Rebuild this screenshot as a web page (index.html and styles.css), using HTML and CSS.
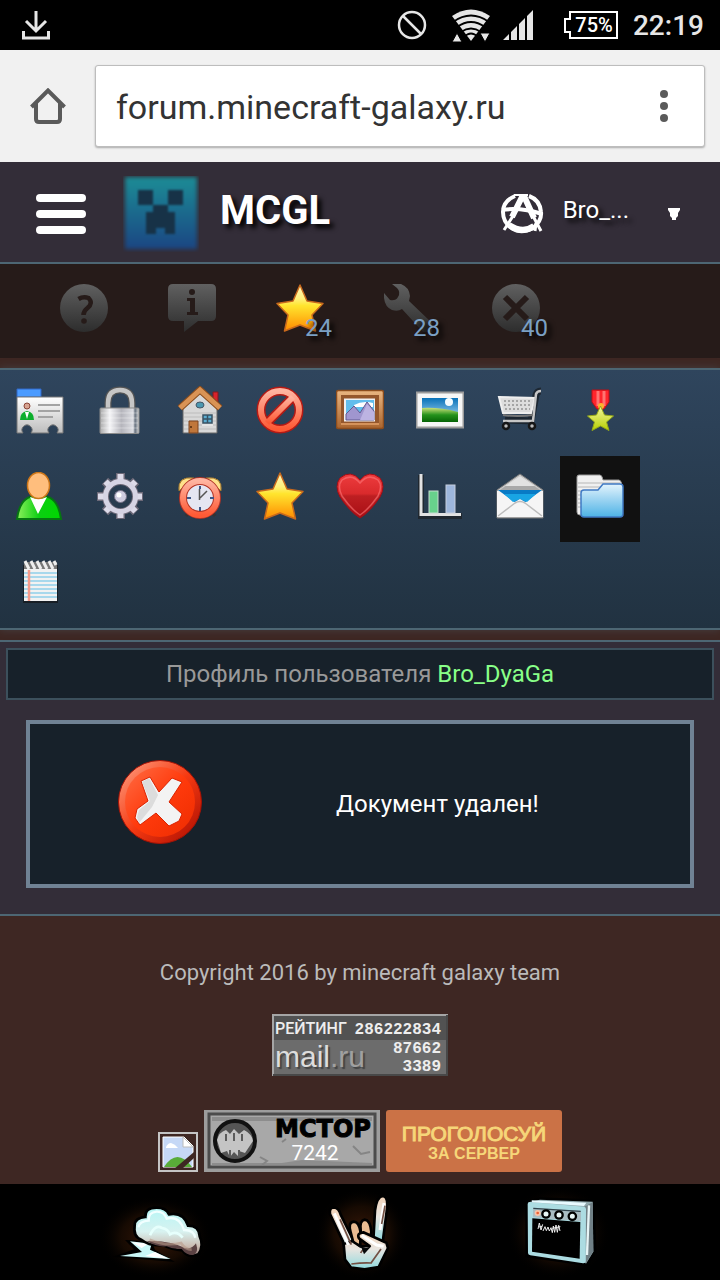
FILE: index.html
```html
<!DOCTYPE html>
<html lang="ru">
<head>
    <meta charset="UTF-8">
    <meta name="viewport" content="width=device-width, initial-scale=1.0">
    <title>MCGL - Профиль пользователя</title>
    <link rel="stylesheet" href="styles.css">
</head>
<body>
    <!-- shared gradients and shapes -->
    <svg class="defs" aria-hidden="true">
        <defs>
            <linearGradient id="gold" x2="0" y2="1"><stop offset="0" stop-color="#fff6c0"/><stop offset=".3" stop-color="#fff07a"/><stop offset=".45" stop-color="#ffe52e"/><stop offset="1" stop-color="#ff8a00"/></linearGradient>
            <linearGradient id="dim" x2="0" y2="1"><stop offset="0" stop-color="#606060"/><stop offset="1" stop-color="#2d2d2d"/></linearGradient>
            <linearGradient id="paper" x2="0" y2="1"><stop offset="0" stop-color="#fff"/><stop offset="1" stop-color="#bdbdbd"/></linearGradient>
            <linearGradient id="steel"><stop offset="0" stop-color="#aaa"/><stop offset=".25" stop-color="#f5f5f7"/><stop offset=".55" stop-color="#b5b5bc"/><stop offset=".85" stop-color="#dcdde2"/><stop offset=".9" stop-color="#66717e"/><stop offset="1" stop-color="#d8d8d8"/></linearGradient>
            <linearGradient id="wood" x2="0" y2="1"><stop offset="0" stop-color="#eab681"/><stop offset="1" stop-color="#a9652f"/></linearGradient>
            <linearGradient id="red" x2="0" y2="1"><stop offset="0" stop-color="#ffb4a0"/><stop offset="1" stop-color="#ff5a35"/></linearGradient>
            <linearGradient id="heart" x2="0" y2="1"><stop offset="0" stop-color="#ee3c3e"/><stop offset=".45" stop-color="#d92a2c"/><stop offset=".5" stop-color="#bd1f22"/><stop offset="1" stop-color="#a80e14"/></linearGradient>
            <linearGradient id="sky" x2="0" y2="1"><stop offset="0" stop-color="#0871b8"/><stop offset="1" stop-color="#c0e7ff"/></linearGradient>
            <linearGradient id="grass" x2="0" y2="1"><stop offset="0" stop-color="#c9df7a"/><stop offset=".5" stop-color="#25921c"/><stop offset="1" stop-color="#066306"/></linearGradient>
            <linearGradient id="folder" x2="0" y2="1"><stop offset="0" stop-color="#e3f4fd"/><stop offset=".45" stop-color="#9fd5f2"/><stop offset="1" stop-color="#4db3e6"/></linearGradient>
            <linearGradient id="green"><stop offset="0" stop-color="#8cf05c"/><stop offset=".5" stop-color="#0bcf12"/><stop offset="1" stop-color="#00d800"/></linearGradient>
            <linearGradient id="logo" x2="0" y2="1"><stop offset="0" stop-color="#1c8c96"/><stop offset="1" stop-color="#1b4683"/></linearGradient>
            <linearGradient id="lime" x2="0" y2="1"><stop offset="0" stop-color="#f3f8a0"/><stop offset="1" stop-color="#b7cf00"/></linearGradient>
            <linearGradient id="error" x2="1" y2="1"><stop offset="0" stop-color="#ff6d45"/><stop offset=".5" stop-color="#ff3a0c"/><stop offset="1" stop-color="#ee2c00"/></linearGradient>
            <linearGradient id="rim" x2="1" y2="1"><stop offset="0" stop-color="#ffa588"/><stop offset=".5" stop-color="#f53a12"/><stop offset="1" stop-color="#a80b00"/></linearGradient>
            <linearGradient id="ice" x2="0" y2="1"><stop offset="0" stop-color="#b6f6f5"/><stop offset=".5" stop-color="#d8f2f0"/><stop offset=".8" stop-color="#cbbcb2"/><stop offset="1" stop-color="#9b8581"/></linearGradient>
            <linearGradient id="skin" x2="0" y2="1"><stop offset="0" stop-color="#f2d3b8"/><stop offset=".45" stop-color="#e8e5e0"/><stop offset="1" stop-color="#8fd9de"/></linearGradient>
            <radialGradient id="glow"><stop offset="0" stop-color="#7a3412" stop-opacity=".5"/><stop offset=".6" stop-color="#4a2208" stop-opacity=".3"/><stop offset="1" stop-color="#000" stop-opacity="0"/></radialGradient>
            <symbol id="star" viewBox="0 0 48 48"><path d="M24 1l7 16 16 2.500L36 31l3.500 16L24 41 8.500 47 12 31 1 19.500 17 17z" fill="url(#gold)" stroke="#c8691c" stroke-width="1.500" stroke-linejoin="round"/></symbol>
        </defs>
    </svg>

    <div class="status-bar">
        <svg class="download" viewBox="0 0 30 30" width="30" height="30"><path d="M15 1v20M5 11l10 10 10-10M2.500 21v7h25v-7" fill="none" stroke="#e6e6e6" stroke-width="3"/></svg>
        <svg class="blocked" viewBox="0 0 30 30" width="30" height="30"><circle cx="15" cy="15" r="13" fill="none" stroke="#e6e6e6" stroke-width="2.500"/><path d="M6 6l18 18" stroke="#e6e6e6" stroke-width="2.500"/></svg>
        <svg class="wifi" viewBox="0 0 40 34" width="40" height="34">
            <path d="M1 8Q20-5 39 8L20 33z" fill="#e6e6e6"/>
            <path d="M2 14Q20 1 38 14M6 19Q20 9 34 19M10 24Q20 17 30 24M13 29Q20 22 27 29" fill="none" stroke="#000" stroke-width="1.800"/>
            <path d="M1 34L6 25l5 9zM29 25h10l-5 9z" fill="#e6e6e6" stroke="#000"/>
        </svg>
        <svg class="signal" viewBox="0 0 30 30" width="30" height="30"><path d="M0 30l6-6v6zM8 22l6-6v14H8zM16 14l6-6v22h-6zM24 6l6-6v30h-6z" fill="#e6e6e6"/></svg>
        <svg class="battery" viewBox="0 0 56 30" width="56" height="30">
            <path d="M7 2h47v26H7v-6H2V9h5z" fill="none" stroke="#fff" stroke-width="2"/>
            <text x="31" y="22" text-anchor="middle" class="battery-text">75%</text>
        </svg>
        <time>22:19</time>
    </div>

    <div class="browser-bar">
        <button class="plain" aria-label="Home"><svg viewBox="0 0 36 36" width="36" height="36"><path d="M1.500 19L18 2.500 34.500 19M6 15v16q0 3 3 3h18q3 0 3-3V15" fill="none" stroke="#5a5a5a" stroke-width="4"/></svg></button>
        <div class="address">
            <input type="text" value="forum.minecraft-galaxy.ru" aria-label="Address">
            <button class="plain" aria-label="Menu"><svg viewBox="0 0 10 34" width="10" height="34"><g fill="#5a5a5a"><circle cx="5" cy="5" r="4"/><circle cx="5" cy="17" r="4"/><circle cx="5" cy="29" r="4"/></g></svg></button>
        </div>
    </div>

    <header>
        <button class="plain menu" aria-label="Меню"><span></span><span></span><span></span></button>
        <a href="#" class="brand">
            <svg viewBox="0 0 76 76" width="76" height="76">
                <rect class="soft" x="2" y="1" width="72" height="72" fill="url(#logo)"/>
                <path class="soft-small" d="M15 14h15v15h15V14h15v15H45v7h7v22H42v-6H33v6H23V36h7v-7H15z" fill="#173247"/>
            </svg>
            <strong>MCGL</strong>
        </a>
        <div class="user">
            <svg viewBox="0 0 44 40" width="44" height="40">
                <g fill="none" stroke="#fff">
                    <path d="M15 2Q3 7 3 18t10 17q9 5 20-1 9-7 8-16Q40 6 29 2" stroke-width="4"/>
                    <path d="M2 16q18-3 40 4" stroke-width="4"/>
                    <path d="M23 1L12 23M24 2l10 22" stroke-width="6"/>
                    <path d="M15 19L4 36M32 20l9 17M36 29l-1 8" stroke-width="3"/>
                    <path d="M9 31q14 9 25 1" stroke-width="6"/>
                    <path d="M14 1h14" stroke-width="2"/>
                </g>
            </svg>
            <a href="#" class="nick">Bro_...</a>
            <button class="plain arrow" aria-label="Открыть"><svg viewBox="0 0 12 14" width="12" height="14"><path d="M0 1h12v2l-2 3v3L8 11v2H4v-2L2 9V6L0 3z" fill="#fff"/></svg></button>
        </div>
    </header>

    <nav class="counters">
        <a href="#" aria-label="Помощь"><svg viewBox="0 0 48 48"><circle cx="24" cy="24" r="24" fill="url(#dim)"/><path d="M18.500 15q5-3 10-1 5 5-1 10-4 3-4 7" fill="none" stroke="#261b19" stroke-width="4.500"/><circle cx="24" cy="37" r="2.800" fill="#261b19"/></svg></a>
        <a href="#" aria-label="Информация"><svg viewBox="0 0 48 48"><path d="M5 0h38q5 0 5 5v27q0 5-5 5H30L16 48V37H5q-5 0-5-5V5q0-5 5-5z" fill="url(#dim)"/><circle cx="24" cy="8" r="3" fill="#261b19"/><path d="M19 14h8v14h3v3H19v-3h3V17h-3z" fill="#261b19"/></svg></a>
        <a href="#" aria-label="Избранное"><svg viewBox="0 0 48 48"><use href="#star"/></svg><span>24</span></a>
        <a href="#" aria-label="Инструменты"><svg viewBox="0 0 48 48"><path d="M8 0h9q8 3 9 12l-1 5 23 22v9h-9L18 25q-4 3-10 1-7-3-8-12V9l6 7q6 1 8-3 3-5-1-9z" fill="url(#dim)"/></svg><span>28</span></a>
        <a href="#" aria-label="Закрытые"><svg viewBox="0 0 48 48"><circle cx="24" cy="24" r="24" fill="url(#dim)"/><path d="M13 13l22 22M35 13L13 35" stroke="#261b19" stroke-width="6"/></svg><span>40</span></a>
    </nav>

    <nav class="icons">
        <a href="#" aria-label="Профиль"><svg viewBox="0 0 48 48">
            <path d="M1 3h24v8H1z" fill="#4b9bff" stroke="#3169c8"/>
            <path d="M1 11h46v36h-6a5 5 0 1 0-8 0H15a5 5 0 1 0-8 0H1z" fill="url(#paper)" stroke="#777"/>
            <circle cx="11" cy="20" r="3" fill="#d7a391" stroke="#8b4537"/>
            <path d="M4 34q0-8 7-9 7 1 7 9z" fill="#0cae2c"/><path d="M9 26h4l-2 7z" fill="#fff"/>
            <path d="M22 19h22M22 25h22M22 31h15" stroke="#a3a3a3" stroke-width="2"/>
        </svg></a>
        <a href="#" aria-label="Доступ"><svg viewBox="0 0 48 48">
            <path d="M12 24V17Q12 4 24 4t12 13v7" fill="none" stroke="#555" stroke-width="7"/>
            <path d="M12 24V17Q12 4 24 4t12 13v7" fill="none" stroke="#c6c6c6" stroke-width="4.500"/>
            <rect x="4" y="22" width="39" height="25.500" rx="1" fill="url(#steel)" stroke="#8b8b8b"/>
            <path d="M5 27h37M5 32h37M5 37h37M5 42h37" stroke="#fff" opacity=".35"/>
        </svg></a>
        <a href="#" aria-label="Дом"><svg viewBox="0 0 48 48">
            <path d="M37 6h5v14l-5-5z" fill="#d8232b" stroke="#801b20"/>
            <path d="M7 22L24 6l17 16v25H7z" fill="#d8d8d8" stroke="#666"/>
            <path d="M8 27h32M8 31h32M8 35h32M8 39h32M8 43h32" stroke="#bcbcbc"/>
            <path d="M4 22L24 4l20 18" fill="none" stroke="#8b4d1d" stroke-width="7"/>
            <path d="M4 22L24 4l20 18" fill="none" stroke="#d99355" stroke-width="5"/>
            <ellipse cx="24" cy="19" rx="4" ry="3" fill="#4b98b2" stroke="#456"/>
            <path d="M27 29h9v8h-9zM31.500 29v8M27 33h9" fill="#5badd0" stroke="#385263" stroke-width="1.500"/>
            <path d="M26 39h11" stroke="#fff"/>
            <path d="M13 35h9v12h-9z" fill="#c0773b" stroke="#7c4520"/><circle cx="15" cy="41" r="1" fill="#512b11"/>
        </svg></a>
        <a href="#" aria-label="Запрет"><svg viewBox="0 0 48 48">
            <g fill="none" stroke="#b51a14" stroke-width="9"><circle cx="24" cy="24" r="19"/><path d="M11 37l26-26"/></g>
            <g fill="none" stroke="url(#red)" stroke-width="6"><circle cx="24" cy="24" r="19"/><path d="M11 37l26-26"/></g>
        </svg></a>
        <a href="#" aria-label="Галерея"><svg viewBox="0 0 48 48">
            <rect x=".5" y="4.500" width="47" height="38" rx="2" fill="url(#wood)" stroke="#8d4d1d" stroke-width="1.500"/>
            <path d="M5 9h38v29H5z" fill="#95572c"/><path d="M5 38h38" stroke="#d5935b" stroke-width="2"/>
            <path d="M8 12.500h31v23H8z" fill="#f0f0f0"/><path d="M10 14h28v20H10z" fill="#62bdec"/>
            <path d="M18 19q9-5 19-2v4H18z" fill="#fff"/>
            <path d="M10 28l8-8 6 7 7-11 7 9v9H10z" fill="#a096cf" stroke="#635b91"/><path d="M24 34l7-16 7 8v8z" fill="#bcb3e2"/>
        </svg></a>
        <a href="#" aria-label="Фото"><svg viewBox="0 0 48 48">
            <rect x=".5" y="6.500" width="47" height="35" fill="#f6f6f6" stroke="#9b9b9b" stroke-width="2"/>
            <path d="M6 12h36v24H6z" fill="url(#sky)"/><circle cx="33" cy="16" r="4" fill="#f3fbff"/>
            <path d="M6 22q17-1 36 4v10H6z" fill="url(#grass)"/>
        </svg></a>
        <a href="#" aria-label="Магазин"><svg viewBox="0 0 48 48">
            <path d="M9 34l26 1 5-26q1-4 5-4" fill="none" stroke="#111" stroke-width="7" opacity=".55"/>
            <path d="M3 11l36 1-4 15H7z" fill="#ddd" stroke="#eee" stroke-width="2"/>
            <path d="M8 15h27M8 19h26M9 23h25" stroke="#a5a5a5" stroke-width="2" stroke-dasharray="2 2"/>
            <path d="M7 35h30l3-27q1-3 5-3" fill="none" stroke="#c6c6c6" stroke-width="2.500"/>
            <path d="M7 29q14 2 30 0" fill="none" stroke="#777" stroke-width="2"/>
            <circle cx="10" cy="40" r="3" fill="#bbb" stroke="#161616" stroke-width="2.500"/><circle cx="36" cy="40" r="3" fill="#bbb" stroke="#161616" stroke-width="2.500"/>
        </svg></a>
        <a href="#" aria-label="Награды"><svg viewBox="0 0 48 48">
            <path d="M16 4h17v12l-5 7h-7l-5-7z" fill="#ff252c" stroke="#bd0e16"/><path d="M22 5v15M28 5v15" stroke="#ff7471" stroke-width="3"/>
            <circle cx="25" cy="20" r="3" fill="#ffb32e"/>
            <path d="M24.500 20l4 9 9 1-7 6 2.500 8.500-8.500-4.500-8.500 4.500 2.500-8.500-7-6 9-1z" fill="url(#lime)" stroke="#95a919"/>
        </svg></a>
        <a href="#" aria-label="Друзья"><svg viewBox="0 0 48 48">
            <path d="M1 47Q4 24 20 24h6q16 0 19 23z" fill="url(#green)" stroke="#067512" stroke-width="2"/>
            <path d="M14 25q9 4 17 0l-9 17z" fill="#fff"/>
            <ellipse cx="22.500" cy="13.500" rx="11" ry="13" fill="#ffbe7d" stroke="#cd7618" stroke-width="1.500"/>
        </svg></a>
        <a href="#" aria-label="Настройки"><svg viewBox="0 0 48 48">
            <g fill="none" stroke="#6c6978" stroke-width="9"><path d="M24.500 1v8M24.500 40v7M1 24.500h8M40 24.500h7M9 9l5 5M35 35l5 5M40 9l-5 5M14 35l-5 5"/></g>
            <circle cx="24.500" cy="24.500" r="15" fill="none" stroke="#6c6978" stroke-width="7"/>
            <g fill="none" stroke="#dddbe9" stroke-width="6"><path d="M24.500 2v9M24.500 38v8M2 24.500h9M38 24.500h8M9.500 9.500l6 6M34 34l5.500 5.500M39.500 9.500l-6 6M15 34l-5.500 5.500"/></g>
            <circle cx="24.500" cy="24.500" r="15" fill="none" stroke="#d6d4e4" stroke-width="5"/>
            <circle cx="24.500" cy="24.500" r="6" fill="#cfcde0" stroke="#777488"/><circle cx="23" cy="23" r="2.500" fill="#fff"/>
        </svg></a>
        <a href="#" aria-label="Будильник"><svg viewBox="0 0 48 48">
            <path d="M13 40l-3 4M36 40l3 4" stroke="#333" stroke-width="3"/>
            <path d="M3 19Q1 4 18 6zM45 19Q47 4 30 6z" fill="#ffe18b" stroke="#a47629"/>
            <circle cx="24" cy="26" r="17" fill="#e5e6f2" stroke="#b33527" stroke-width="8"/>
            <circle cx="24" cy="26" r="17" fill="none" stroke="url(#red)" stroke-width="6"/>
            <path d="M24 14v3M24 35v4M11 26h4M34 26h4" stroke="#3e5687" stroke-width="2"/><path d="M23.500 28V17M24 26l7-7" stroke="#555" stroke-width="1.500"/>
        </svg></a>
        <a href="#" aria-label="Избранное"><svg viewBox="0 0 48 48"><use href="#star"/></svg></a>
        <a href="#" aria-label="Нравится"><svg viewBox="0 0 48 48">
            <path d="M24 46Q14 40 4 25-2 14 4 6q11-9 20 2 9-11 20-2 6 8 0 19Q34 40 24 46z" fill="url(#heart)" stroke="#a30d15"/>
            <path d="M24 43Q15 37 6 24 1 14 6 8q10-7 18 3 8-10 18-3 5 6 0 16Q33 37 24 43z" fill="none" stroke="#ff7778" stroke-width="1.500" opacity=".6"/>
        </svg></a>
        <a href="#" aria-label="Статистика"><svg viewBox="0 0 48 48">
            <path d="M5 3v41h41" fill="none" stroke="#202830" stroke-width="6"/><path d="M5 2v40.500h40" fill="none" stroke="#e2e2e2" stroke-width="3"/>
            <rect x="13" y="19" width="9" height="22" fill="#68d18c" stroke="#c5ddcf"/><rect x="30" y="13" width="9" height="28" fill="#9db6dc" stroke="#c6cedd"/>
        </svg></a>
        <a href="#" aria-label="Сообщения"><svg viewBox="0 0 48 48">
            <path d="M1 18L24 2l23 16v28H1z" fill="#c8c8c8" stroke="#777"/><path d="M4 18L24 4l20 14" fill="#a9a9a9"/><path d="M9 14L24 4l15 10z" fill="#e2e2e2"/>
            <path d="M1 19h46v26H1z" fill="#f5f5f5"/>
            <path d="M2 18h44L28 31h-8z" fill="#087ac5"/><path d="M8 22h32l-9 8-7-3-7 3z" fill="#18a4e4"/>
            <path d="M17 31l7-4 7 4z" fill="#f5f5f5"/>
            <path d="M2 44l17-13q5-3 10 0l17 13" fill="none" stroke="#bcbcbc" stroke-width="1.500"/>
        </svg></a>
        <a href="#" class="active" aria-label="Документы"><svg viewBox="0 0 48 48">
            <path d="M1 5q0-2 2-2h21q2 0 3 5h16q2 0 3 5v30H4q-3 0-3-3z" fill="#f0f0f0" stroke="#999"/>
            <path d="M2 11h42M2 15h38M2 19h6M2 23h3M2 27h3M2 31h3M2 35h3" stroke="#b6b6b6"/>
            <path d="M5 21q0-3 3-3h14l5-6h17q3 0 3 3v27q0 3-3 3H8q-3 0-3-3z" fill="url(#folder)" stroke="#3f79c4" stroke-width="1.500"/>
        </svg></a>
        <a href="#" aria-label="Блокнот"><svg viewBox="0 0 48 48">
            <path d="M7 7h35v38H7z" fill="#111" opacity=".6"/><path d="M8 6h33v37H8z" fill="#f2f2f2"/>
            <path d="M8 15h33M8 19h33M8 23h33M8 27h33M8 31h33M8 35h33M8 39h33" stroke="#a8d8ec" stroke-width="2"/>
            <path d="M13 12v31" stroke="#f49b8b" stroke-width="2.500"/>
            <path d="M8 4h33v7H8z" fill="#777"/><path d="M9 3l4 8M15 3l4 8M21 3l4 8M27 3l4 8M33 3l4 8M38 3l2 4" stroke="#eee" stroke-width="3"/>
        </svg></a>
    </nav>

    <main>
        <h1>Профиль пользователя <a href="#">Bro_DyaGa</a></h1>
        <div class="message">
            <svg viewBox="0 0 84 88" width="84" height="88">
                <circle cx="42" cy="42" r="41.500" fill="url(#rim)" stroke="#a51205"/>
                <ellipse cx="42" cy="42" rx="35" ry="35" fill="url(#error)"/>
                <path d="M23 21l9-4 9 15L54 18l10 4-13 20 13 12-3 7-10 5-13-13-16 12-5-7 2-9 11-8z" fill="#f3f3f3" stroke="#db2200"/>
                <path d="M24 22l7-4 9 17-6 12-13 16-2-6 2-7 11-9z" fill="#dcdcdc"/>
            </svg>
            <p>Документ удален!</p>
        </div>
    </main>

    <footer>
        <p>Copyright 2016 by minecraft galaxy team</p>
        <a href="#" class="banner">
            <svg viewBox="0 0 176 62" width="176" height="62">
                <path d="M0 0h176v62H0z" fill="#6c6c6c"/><path d="M2 2h172v24H2z" fill="#525252"/>
                <path d="M1 62V1h175" fill="none" stroke="#a5a5a5" stroke-width="2"/><path d="M1 61h174V1" fill="none" stroke="#484848" stroke-width="2"/>
                <text x="3" y="20" class="rating">РЕЙТИНГ</text>
                <text x="169" y="20" text-anchor="end" class="digits">286222834</text>
                <text x="3" y="53" class="mail">mail<tspan fill="#a0a0a0">.ru</tspan></text>
                <text x="169" y="39" text-anchor="end" class="digits">87662</text>
                <text x="169" y="57" text-anchor="end" class="digits">3389</text>
            </svg>
        </a>
        <div class="banners">
            <svg viewBox="0 0 40 40" width="40" height="40">
                <path d="M1 1h38v38H1z" fill="none" stroke="#c4c4c4" stroke-width="2"/>
                <path d="M5 5h21l9 9v21H5z" fill="#c6d8f6" stroke="#fff"/><path d="M25 5v10h10z" fill="#fff" stroke="#bbb"/>
                <path d="M8 15q2-4 5-4 4 1 7 5H8z" fill="#fff"/><path d="M6 35q13-20 28 0z" fill="#59ac38"/><path d="M16 37l20-17v6L24 37z" fill="#3e2723"/>
            </svg>
            <a href="#"><svg viewBox="0 0 176 62" width="176" height="62">
                <path d="M0 0h176v62H0z" fill="#9d9d9d"/><path d="M5 4h166v53H5z" fill="#a8a8a8" stroke="#4c4c4c" stroke-width="3"/>
                <path d="M8 7h160v4H8zM8 53h70l20-3 70 3v3H8z" fill="#818181" opacity=".7"/>
                <path d="M56 47l7 4-5 4M149 36l8 8 9-2M78 32l4-3" fill="none" stroke="#858585" stroke-width="2"/>
                <circle cx="31" cy="31" r="20" fill="#555" stroke="#111" stroke-width="4"/>
                <path d="M13 30q2-8 9-10l4 4 4-5 5 5 5-4q8 4 9 11l-8 12-6-2v6l-5-5-4 5-3-6-6 2z" fill="#c4c4c4"/>
                <path d="M22 24v7M30 23v8M38 24v7M26 40v7M35 40v7" stroke="#5c5c5c" stroke-width="2"/>
                <text x="119" y="27" text-anchor="middle" class="mctop">MCTOP</text>
                <text x="111" y="50" text-anchor="middle" class="place">7242</text>
            </svg></a>
            <a href="#" class="vote"><b>ПРОГОЛОСУЙ</b><small>ЗА СЕРВЕР</small></a>
        </div>
    </footer>

    <div class="system-nav">
        <button class="plain" aria-label="Back"><svg viewBox="-6 0 360 288" width="120" height="96">
            <ellipse cx="165" cy="160" rx="170" ry="125" fill="url(#glow)"/>
            <path d="M75 168l80 4 10 25 60 37-185-16 62-22z" fill="#000"/>
            <path d="M90 172l65 7-5 18 62 28-152-9 66-12z" fill="#c9f7f7"/><path d="M95 174l50 5-20 13zM135 216l30-12 40 20z" fill="#fff"/>
            <path d="M104 125q0-24 32-26-2-28 34-28 28 0 37 20 44-8 57 34 34 0 35 32 14 28-4 54-29 13-48-12-30-2-58-16-40 4-65-16-25-8-20-42z" fill="url(#ice)" stroke="#000" stroke-width="8"/>
            <path d="M140 172q31 18 60 15 20 10 45 8 13 18 33 18 20-5 10-35-13 20-34 14-28-14-47-16-33-8-67-4z" fill="#5b4243"/>
            <path d="M115 130q3-18 31-20-2-25 24-27 22-1 30 21 38-10 52 34 29-1 34 23" fill="none" stroke="#f1ffff" stroke-width="7"/>
            <path d="M150 154q15-34 36-22 18 3 24 19 20-13 38 10" fill="none" stroke="#e6fffc" stroke-width="8"/>
            <path d="M149 167q51 21 94 10 12 20 32 20" fill="none" stroke="#b89988" stroke-width="8" opacity=".6"/>
        </svg></button>
        <button class="plain" aria-label="Home"><svg viewBox="600 0 360 288" width="120" height="96">
            <ellipse cx="785" cy="150" rx="140" ry="138" fill="url(#glow)"/>
            <g stroke="#000" stroke-width="8" stroke-linejoin="round">
                <path d="M690 90q-3-20 12-20 15 2 20 22l42 85 8 50q-12 27-29 2l-14-56z" fill="url(#skin)"/>
                <path d="M752 145q-9-30 9-32 15 0 20 28v42h-19z" fill="#e8bb92"/><path d="M782 138q-4-28 12-31 17 1 20 37l-6 27-26-9z" fill="#e8bb92"/>
                <path d="M820 169l5-90q6-43 25-43 17 5 10 46l-12 93z" fill="url(#skin)"/>
                <path d="M731 180l25-9 25 16 28-1-32-23q-8-16 13-18l69 31 5 16-28 57-42 7-41-5-18-24z" fill="url(#skin)"/>
            </g>
            <path d="M703 88l42 95M852 57l-12 81M785 154l45 29 21 4" fill="none" stroke="#fff" stroke-width="9"/>
            <path d="M720 106l34 76M855 65l-10 55M754 240q38-5 59-3l30-42M782 207q6-15 18-7" fill="none" stroke="#735044" stroke-width="5"/>
            <path d="M770 184l28 8 16-5-22 24-7-18z" fill="#07090a"/>
        </svg></button>
        <button class="plain" aria-label="Recent"><svg viewBox="66 0 360 288" width="120" height="96">
            <ellipse cx="235" cy="145" rx="155" ry="140" fill="url(#glow)"/>
            <path d="M140 55l40-11 161 6 4 155-24 37-181-26z" fill="#000" stroke="#000" stroke-width="8"/>
            <path d="M145 55l35-8 158 6 2 150-22 36z" fill="#91a8ad"/><path d="M313 68l25-13 2 147-22 35z" fill="#718086"/>
            <path d="M143 60q0-6 7-6l162 14q6 0 6 8l-1 155q0 8-8 7l-158-24q-7-1-7-7z" fill="#acdce2"/>
            <path d="M155 49l164 7-7 10-156-11z" fill="#e8faff"/><path d="M327 64l-6 149" stroke="#e7f5f7" stroke-width="7"/>
            <path d="M159 71l144 10v31l-144-12z" fill="#a9bdc3"/><path d="M157 103l144 11-2 110-143-21z" fill="#000"/>
            <path d="M160 73l142 9" stroke="#31434c" stroke-width="4"/><circle cx="173" cy="87" r="9" fill="#fac3a7"/><circle cx="173" cy="87" r="4" fill="#ed6133"/>
            <g fill="#e9f7f7" stroke="#000" stroke-width="7"><circle cx="198" cy="90" r="11"/><circle cx="237" cy="93" r="11"/><circle cx="277" cy="97" r="11"/></g>
            <path d="M174 135l4-18 5 21 5-17M177 129l9-2M189 141l6-13 4 12 5-11 4 12 5-10 4 15 3-20 4 19 4-22 4 22 4-21 4 17M217 133l24-5" fill="none" stroke="#eee" stroke-width="3"/>
        </svg></button>
    </div>
</body>
</html>
```
FILE: styles.css
```css
* { box-sizing: border-box; }
body { margin: 0; min-height: 100vh; display: flex; flex-direction: column; background-color: #3e2723; color: #fff; font-family: Roboto, sans-serif; font-size: 24px; line-height: 28px; }
a { color: inherit; text-decoration: none; }
p, h1 { margin: 0; font-weight: normal; }
svg { display: block; flex: none; }
.defs { position: absolute; width: 0; height: 0; }
.plain { background: none; border: none; padding: 0; color: inherit; cursor: pointer; }

.status-bar { height: 50px; padding: 0 16px 0 21px; display: flex; align-items: center; background-color: #000; color: #e6e6e6; }
.blocked { margin-left: auto; }
.wifi { margin-left: 24px; }
.signal { margin-left: 12px; }
.battery { margin-left: 30px; }
.battery-text { font-size: 20px; font-weight: 500; fill: #fff; }
.status-bar time { margin-left: 14px; padding-top: 2px; font-size: 28px; font-weight: 500; }

.browser-bar { height: 112px; padding: 15px 15px 15px 30px; display: flex; align-items: center; gap: 29px; background-color: #f1f1f1; }
.address { flex: 1; height: 82px; padding: 0 35px 0 20px; display: flex; align-items: center; background-color: #fff; border: 1px solid #bdbdbd; border-radius: 3px; box-shadow: 0 1px 2px #aaa; }
.address input { flex: 1; min-width: 0; padding: 2px 0 0; border: none; outline: none; background: none; color: #333; font-family: inherit; font-size: 34px; }

header { height: 102px; padding: 4px 40px 0 36px; display: flex; align-items: center; background-color: #332d38; border-bottom: 2px solid #4d6673; }
.menu { width: 50px; display: flex; flex-direction: column; gap: 8px; }
.menu span { width: 100%; height: 8px; border-radius: 4px; background-color: #fff; }
.brand { margin-left: 37px; display: flex; align-items: center; gap: 21px; }
.brand strong { padding-bottom: 6px; font-size: 40px; line-height: 44px; text-shadow: 4px 4px 5px #000; }
.soft { filter: blur(2px); }
.soft-small { filter: blur(1px); }
.user { margin-left: auto; display: flex; align-items: center; }
.nick { margin-left: 19px; padding-bottom: 8px; text-shadow: 4px 4px 5px #000; }
.arrow { margin-left: 39px; }

.counters { height: 94px; padding: 20px 60px; display: flex; gap: 60px; background-color: #261b19; }
.counters a { position: relative; width: 48px; height: 48px; }
.counters svg { width: 48px; height: 48px; }
.counters span { position: absolute; left: 29px; top: 30px; color: #7ba0c4; text-shadow: 4px 4px 5px #000; }

.icons { margin: 10px 0; padding-right: 20px; display: grid; grid-template-columns: repeat(auto-fill, 80px); background-image: linear-gradient(#2f455d, #213241); border-top: 2px solid #4d6673; border-bottom: 2px solid #4d6673; box-shadow: 0 0 8px rgba(77, 102, 115, .4); }
.icons a { height: 86px; padding: 16px; }
.icons .active { background-color: #111; }
.icons svg { width: 48px; height: 48px; }

main { padding: 6px 6px 26px; background-color: #332d38; border-top: 2px solid #4d6673; border-bottom: 2px solid #4d6673; }
h1 { height: 52px; padding: 10px; font-size: 24px; line-height: 28px; text-align: center; color: #999; background-color: #17212a; border: 2px solid #3c505c; }
h1 a { color: #8f8; }
.message { margin: 20px 20px 0; min-height: 168px; padding: 0 88px; display: flex; align-items: center; gap: 134px; background-color: #17212a; border: 4px solid #708294; }

footer { flex: 1; padding: 43px 0 12px; display: flex; flex-direction: column; align-items: center; font-size: 22px; color: #bbb; }
.banner { margin: 27px 0 34px; }
.banners { display: flex; align-items: flex-end; gap: 6px; }
.rating { font-family: Roboto, sans-serif; font-size: 16px; font-weight: 500; fill: #eee; }
.digits { font-family: "Liberation Mono", monospace; font-size: 16px; font-weight: bold; fill: #eee; }
.mail { font-family: "Liberation Sans", sans-serif; font-size: 30px; fill: #ddd; text-shadow: 2px 2px 1px #444; }
.mctop { font-family: "DejaVu Sans", sans-serif; font-size: 24px; font-weight: bold; fill: #000; stroke: #000; }
.place { font-family: Roboto, sans-serif; font-size: 21px; fill: #fff; }
.vote { width: 176px; height: 62px; padding-top: 13px; background-color: #cb7246; border-radius: 3px; text-align: center; color: #f6d679; font-family: "Liberation Sans", sans-serif; }
.vote b { display: block; font-size: 21px; line-height: 22px; font-weight: normal; -webkit-text-stroke: 1px #f6d679; }
.vote small { display: block; font-size: 16px; line-height: 18px; font-weight: bold; }

.system-nav { height: 96px; display: flex; justify-content: center; background-color: #000; }
.system-nav button { width: 28%; display: flex; justify-content: center; }
```
